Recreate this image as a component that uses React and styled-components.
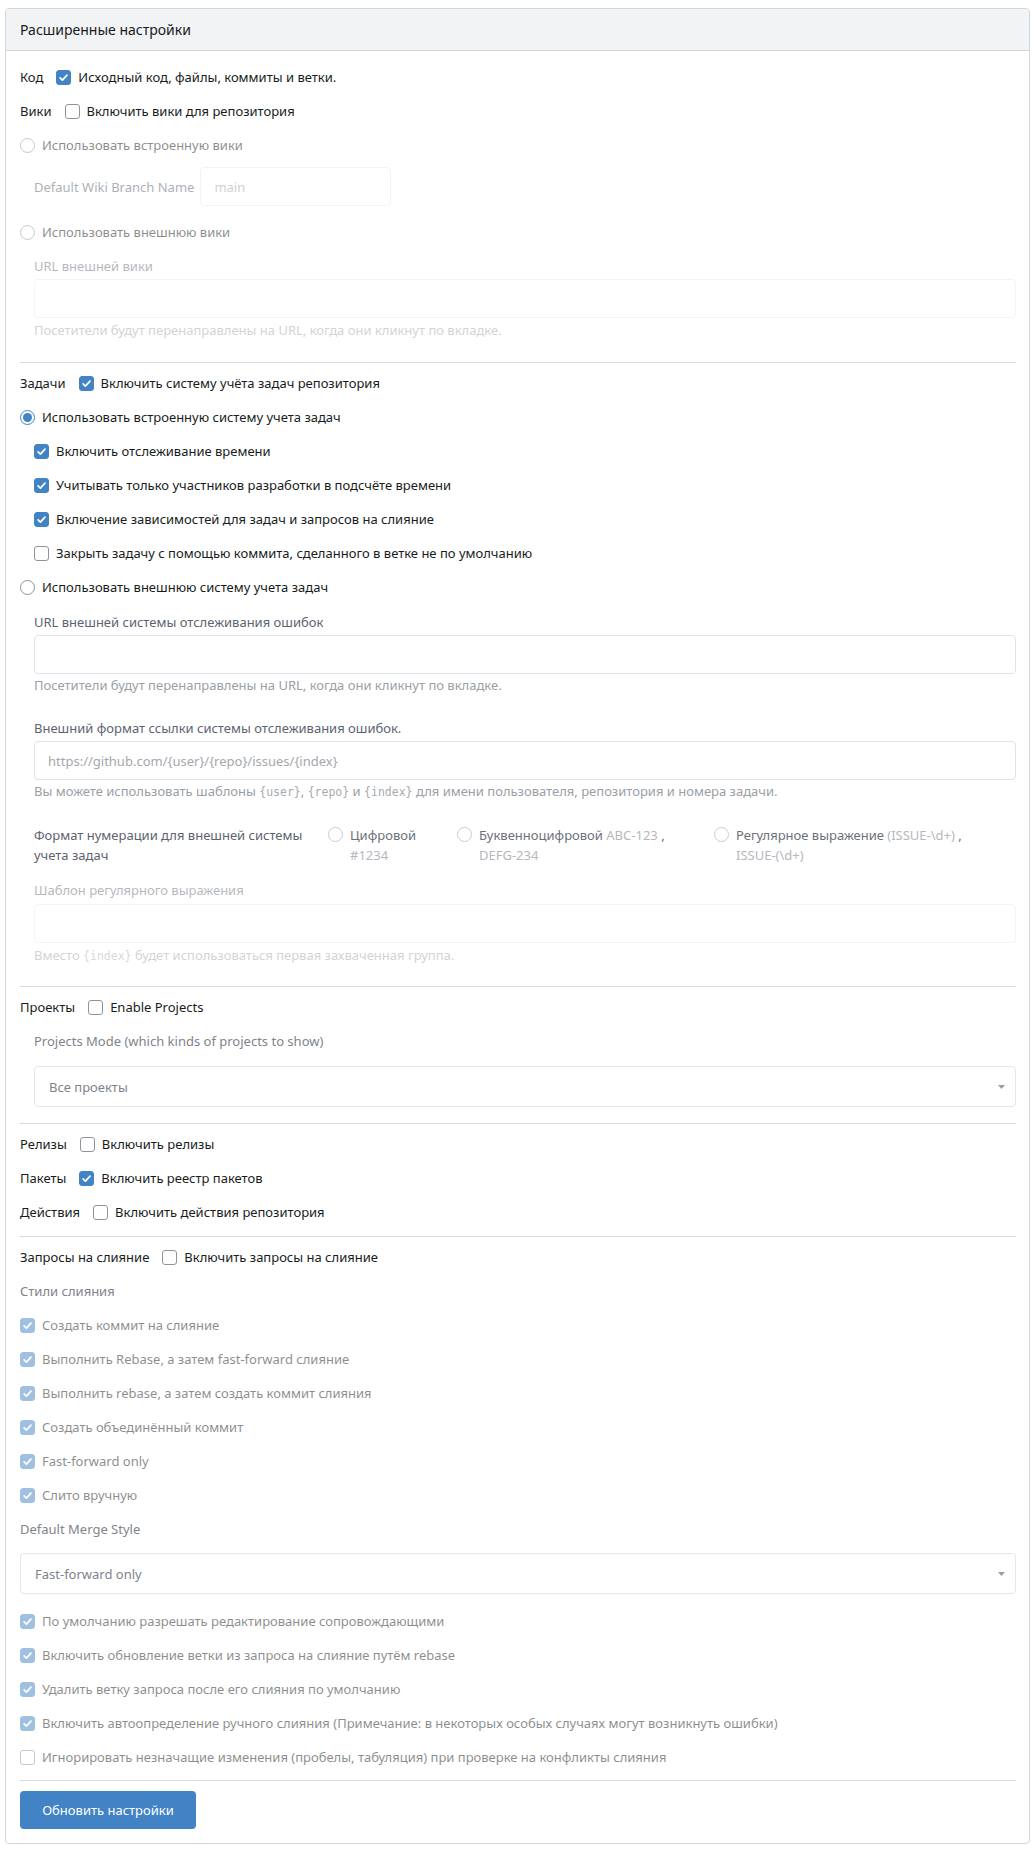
import React from "react";
import styled, { createGlobalStyle } from "styled-components";

const GlobalStyle = createGlobalStyle`
  body {
    margin: 0;
    background: #fff;
    font-family: "Noto Sans", "Open Sans", sans-serif;
    font-size: 13px;
    color: #181c21;
  }
  * { box-sizing: border-box; }
`;

const Page = styled.div`
  padding: 8px 4px 7px 5px;
`;

const Card = styled.section`
  border: 1px solid #d0d7de;
  border-radius: 4px;
  overflow: hidden;
`;

const Header = styled.h4`
  margin: 0;
  height: 42px;
  padding: 0 14px 1px;
  display: flex;
  align-items: center;
  background: #f2f3f5;
  border-bottom: 1px solid #d0d7de;
  font-size: 14px;
  font-weight: 400;
`;

const Body = styled.form`
  padding: 16px 13px 14px 14px;
`;

const Row = styled.div`
  display: flex;
  align-items: center;
  min-height: 20px;
  line-height: 20px;
  margin-bottom: ${(p) => p.$mb ?? 14}px;
  padding-left: ${(p) => (p.$indent ? 14 : 0)}px;
  opacity: ${(p) => (p.$disabled ? 0.5 : 1)};
  color: ${(p) => (p.$muted ? "#7f848b" : "#181c21")};
`;

const InlineLabel = styled.span`
  margin-right: 13px;
`;

const Box = styled.span`
  flex: none;
  width: 15px;
  height: 15px;
  margin-right: 7px;
  border-radius: 3px;
  display: inline-flex;
  align-items: center;
  justify-content: center;
  background: ${(p) => (p.$on ? "#4183c4" : "#fff")};
  border: 1px solid ${(p) => (p.$on ? "#4183c4" : "#8f949c")};
`;

const Circle = styled.span`
  flex: none;
  width: 15px;
  height: 15px;
  margin-right: 7px;
  border-radius: 50%;
  display: inline-flex;
  align-items: center;
  justify-content: center;
  background: #fff;
  border: 1px solid ${(p) => (p.$on ? "#4183c4" : p.$light ? "#c9cdd2" : "#8f949c")};
`;

const Dot = styled.span`
  width: 9px;
  height: 9px;
  border-radius: 50%;
  background: #4183c4;
`;

const Checkbox = ({ on }) => (
  <Box $on={on}>
    {on && (
      <svg width="11" height="11" viewBox="0 0 12 12">
        <path d="M2.3 6.4 4.8 8.8 9.8 3.4" fill="none" stroke="#fff" strokeWidth="1.9" strokeLinecap="round" strokeLinejoin="round" />
      </svg>
    )}
  </Box>
);

const Radio = ({ on, light }) => <Circle $on={on} $light={light}>{on && <Dot />}</Circle>;

const Block = styled.div`
  padding-left: ${(p) => (p.$indent ? 14 : 0)}px;
  margin-bottom: ${(p) => p.$mb ?? 14}px;
  opacity: ${(p) => (p.$disabled ? 0.45 : 1)};
`;

const FieldLabel = styled.div`
  line-height: 18px;
  color: ${(p) => (p.$muted ? "#7f848b" : "#5c6370")};
  margin-bottom: ${(p) => p.$mb ?? 4}px;
`;

const Input = styled.input`
  display: block;
  width: ${(p) => p.$width || "100%"};
  height: 39px;
  padding: 0 13px;
  border: 1px solid ${(p) => (p.disabled ? "#e6e8eb" : "#dfe2e6")};
  border-radius: 4px;
  background: #fff;
  font: inherit;
  color: #a0a4aa;
  &::placeholder { color: #a4a8ad; }
`;

const Help = styled.div`
  margin-top: ${(p) => p.$mt ?? 2}px;
  line-height: 18px;
  color: #9aa0a6;
`;

const Code = styled.code`
  font-family: "DejaVu Sans Mono", "Liberation Mono", monospace;
  font-size: 11.5px;
  color: #a7abb0;
`;

const BranchRow = styled.div`
  display: flex;
  align-items: center;
  padding-left: 14px;
  margin-bottom: 16px;
  opacity: 0.5;
  label { color: #5c6370; margin-right: 6px; }
`;

const Divider = styled.hr`
  border: 0;
  border-top: 1px solid #d8dce1;
  margin: 0 0 10px;
`;

const FormatRow = styled.div`
  display: flex;
  align-items: flex-start;
  padding-left: 14px;
  margin-bottom: 16px;
  line-height: 20px;
`;

const FormatLabel = styled.div`
  flex: none;
  width: 294px;
  padding-right: 14px;
  color: #5c6370;
`;

const Option = styled.div`
  display: flex;
  align-items: flex-start;
  flex: ${(p) => (p.$width ? "none" : "1")};
  width: ${(p) => (p.$width ? `${p.$width}px` : "auto")};
  color: #6b717a;
  ${Circle} { margin-top: 2px; }
`;

const OptionText = styled.span`
  max-width: ${(p) => p.$max}px;
`;

const Light = styled.span`
  color: #b4b8bd;
`;

const Select = styled.div`
  position: relative;
  height: 41px;
  margin-left: ${(p) => (p.$indent ? 14 : 0)}px;
  margin-bottom: ${(p) => p.$mb ?? 14}px;
  padding: 0 14px;
  display: flex;
  align-items: center;
  border: 1px solid #e3e6ea;
  border-radius: 4px;
  color: #7d838b;
  svg { position: absolute; right: 10px; top: 18px; }
`;

const Caret = () => (
  <svg width="7" height="4" viewBox="0 0 7 4">
    <path d="M0 0h7L3.5 4z" fill="#9a9ea4" />
  </svg>
);

const Button = styled.button`
  display: block;
  width: 176px;
  height: 38px;
  margin-top: 10px;
  border: 0;
  border-radius: 4px;
  background: #4183c4;
  color: #fff;
  font: inherit;
  cursor: pointer;
`;

const Check = ({ on, children, ...rest }) => (
  <Row {...rest}>
    <Checkbox on={on} />
    <span>{children}</span>
  </Row>
);

const RadioRow = ({ on, children, ...rest }) => (
  <Row {...rest}>
    <Radio on={on} />
    <span>{children}</span>
  </Row>
);

const timeOptions = [
  ["Включить отслеживание времени", true],
  ["Учитывать только участников разработки в подсчёте времени", true],
  ["Включение зависимостей для задач и запросов на слияние", true],
  ["Закрыть задачу с помощью коммита, сделанного в ветке не по умолчанию", false],
];

const mergeStyles = [
  "Создать коммит на слияние",
  "Выполнить Rebase, а затем fast-forward слияние",
  "Выполнить rebase, а затем создать коммит слияния",
  "Создать объединённый коммит",
  "Fast-forward only",
  "Слито вручную",
];

const mergeOptions = [
  ["По умолчанию разрешать редактирование сопровождающими", true],
  ["Включить обновление ветки из запроса на слияние путём rebase", true],
  ["Удалить ветку запроса после его слияния по умолчанию", true],
  ["Включить автоопределение ручного слияния (Примечание: в некоторых особых случаях могут возникнуть ошибки)", true],
  ["Игнорировать незначащие изменения (пробелы, табуляция) при проверке на конфликты слияния", false],
];

export default function App() {
  return (
    <Page>
      <GlobalStyle />
      <Card>
        <Header>Расширенные настройки</Header>
        <Body onSubmit={(e) => e.preventDefault()}>
          <Row>
            <InlineLabel>Код</InlineLabel>
            <Checkbox on />
            <span>Исходный код, файлы, коммиты и ветки.</span>
          </Row>
          <Row>
            <InlineLabel>Вики</InlineLabel>
            <Checkbox />
            <span>Включить вики для репозитория</span>
          </Row>
          <RadioRow $disabled $mb={12}>Использовать встроенную вики</RadioRow>
          <BranchRow>
            <label>Default Wiki Branch Name</label>
            <Input disabled $width="191px" defaultValue="main" />
          </BranchRow>
          <RadioRow $disabled $mb={15}>Использовать внешнюю вики</RadioRow>
          <Block $indent $disabled $mb={23}>
            <FieldLabel>URL внешней вики</FieldLabel>
            <Input disabled />
            <Help $mt={3}>Посетители будут перенаправлены на URL, когда они кликнут по вкладке.</Help>
          </Block>
          <Divider />

          <Row>
            <InlineLabel>Задачи</InlineLabel>
            <Checkbox on />
            <span>Включить систему учёта задач репозитория</span>
          </Row>
          <RadioRow on>Использовать встроенную систему учета задач</RadioRow>
          {timeOptions.map(([text, on]) => (
            <Check key={text} on={on} $indent>{text}</Check>
          ))}
          <RadioRow $mb={16}>Использовать внешнюю систему учета задач</RadioRow>
          <Block $indent $mb={25}>
            <FieldLabel>URL внешней системы отслеживания ошибок</FieldLabel>
            <Input />
            <Help>Посетители будут перенаправлены на URL, когда они кликнут по вкладке.</Help>
          </Block>
          <Block $indent $mb={24}>
            <FieldLabel>Внешний формат ссылки системы отслеживания ошибок.</FieldLabel>
            <Input placeholder="https://github.com/{user}/{repo}/issues/{index}" />
            <Help>
              Вы можете использовать шаблоны <Code>{"{user}"}</Code>, <Code>{"{repo}"}</Code> и{" "}
              <Code>{"{index}"}</Code> для имени пользователя, репозитория и номера задачи.
            </Help>
          </Block>
          <FormatRow>
            <FormatLabel>Формат нумерации для внешней системы учета задач</FormatLabel>
            <Option $width={129}>
              <Radio light />
              <OptionText $max={80}>
                Цифровой <Light>#1234</Light>
              </OptionText>
            </Option>
            <Option $width={257}>
              <Radio light />
              <OptionText $max={215}>
                Буквенноцифровой <Light>ABC-123</Light> , <Light>DEFG-234</Light>
              </OptionText>
            </Option>
            <Option>
              <Radio light />
              <OptionText $max={250}>
                Регулярное выражение <Light>(ISSUE-\d+)</Light> , <Light>ISSUE-(\d+)</Light>
              </OptionText>
            </Option>
          </FormatRow>
          <Block $indent $disabled $mb={21}>
            <FieldLabel $mb={5}>Шаблон регулярного выражения</FieldLabel>
            <Input disabled />
            <Help $mt={3}>
              Вместо <Code>{"{index}"}</Code> будет использоваться первая захваченная группа.
            </Help>
          </Block>
          <Divider />

          <Row $mb={15}>
            <InlineLabel>Проекты</InlineLabel>
            <Checkbox />
            <span>Enable Projects</span>
          </Row>
          <Block $indent $mb={0}>
            <FieldLabel $muted $mb={16}>Projects Mode (which kinds of projects to show)</FieldLabel>
          </Block>
          <Select $indent $mb={16}>
            Все проекты
            <Caret />
          </Select>
          <Divider />

          <Row>
            <InlineLabel>Релизы</InlineLabel>
            <Checkbox />
            <span>Включить релизы</span>
          </Row>
          <Row>
            <InlineLabel>Пакеты</InlineLabel>
            <Checkbox on />
            <span>Включить реестр пакетов</span>
          </Row>
          <Row>
            <InlineLabel>Действия</InlineLabel>
            <Checkbox />
            <span>Включить действия репозитория</span>
          </Row>
          <Divider />

          <Row>
            <InlineLabel>Запросы на слияние</InlineLabel>
            <Checkbox />
            <span>Включить запросы на слияние</span>
          </Row>
          <Row $muted>Стили слияния</Row>
          {mergeStyles.map((text) => (
            <Check key={text} on $disabled>{text}</Check>
          ))}
          <Row $muted>Default Merge Style</Row>
          <Select $mb={17}>
            Fast-forward only
            <Caret />
          </Select>
          {mergeOptions.map(([text, on], i) => (
            <Check key={text} on={on} $disabled $mb={i === mergeOptions.length - 1 ? 13 : 14}>
              {text}
            </Check>
          ))}
          <Divider />
          <Button type="submit">Обновить настройки</Button>
        </Body>
      </Card>
    </Page>
  );
}
